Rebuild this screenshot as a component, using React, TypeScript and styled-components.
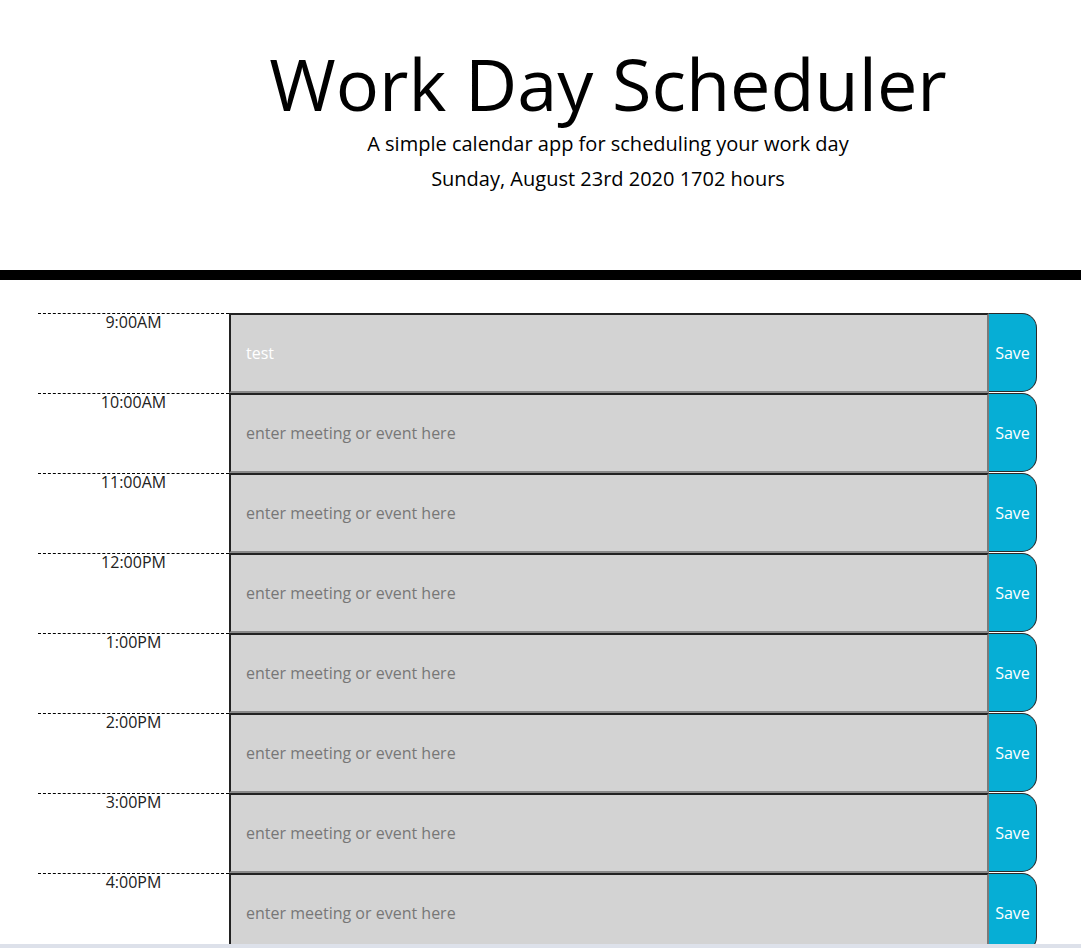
import * as React from 'react'
import styled, { createGlobalStyle } from 'styled-components'

const GlobalStyle = createGlobalStyle`
  html, body {
    margin: 0;
    padding: 0;
    overflow: hidden;
    background: #ffffff;
    font-family: 'Open Sans', 'Liberation Sans', sans-serif;
  }
`

const Jumbotron = styled.header`
  display: flex;
  flex-direction: column;
  align-items: center;
  padding: 40px 0 76px 135px;
  border-bottom: 10px solid #000000;
  color: #000000;
  text-align: center;
`

const Title = styled.h1`
  margin: 0;
  font-size: 72px;
  line-height: 86px;
  font-weight: 400;
`

const Lead = styled.p<{ $gap: number }>`
  margin: ${({ $gap }) => $gap}px 0 0;
  font-size: 20px;
  line-height: 30px;
  font-weight: 400;
`

const Planner = styled.main`
  display: flex;
  flex-direction: column;
  padding: 33px 0 0 38px;
`

const TimeRow = styled.div`
  display: grid;
  grid-template-columns: 191px 760px 48px;
  height: 80px;
`

const Hour = styled.div`
  border-top: 1px dashed #000000;
  text-align: center;
  font-size: 16px;
  line-height: 16px;
  color: #222222;
`

const Note = styled.textarea`
  box-sizing: border-box;
  width: 100%;
  height: 80px;
  margin: 0;
  resize: none;
  background: #d3d3d3;
  border-style: solid;
  border-width: 2px;
  border-color: #222222 #7a7a7a #8a8a8a #222222;
  padding: 27px 15px 0;
  font-family: 'Open Sans', 'Liberation Sans', sans-serif;
  font-size: 16px;
  line-height: 22px;
  color: #ffffff;
  outline: none;

  &::placeholder {
    color: #777777;
  }
`

const SaveBtn = styled.button`
  box-sizing: border-box;
  height: 79px;
  margin: 0;
  padding: 0;
  background: #06aed5;
  color: #ffffff;
  border: 1px solid #2a2a2a;
  border-left: none;
  border-radius: 0 15px 15px 0;
  font-family: 'Open Sans', 'Liberation Sans', sans-serif;
  font-size: 16px;
  cursor: pointer;
`

const ScrollTrack = styled.div`
  position: fixed;
  left: 0;
  right: 0;
  bottom: 0;
  height: 4px;
  background: #dde1ea;
`

const hours = ['9:00AM', '10:00AM', '11:00AM', '12:00PM', '1:00PM', '2:00PM', '3:00PM', '4:00PM']

const App: React.FC = () => {
  const [notes, setNotes] = React.useState<string[]>(['test', '', '', '', '', '', '', ''])

  return (
    <>
      <GlobalStyle />
      <Jumbotron>
        <Title>Work Day Scheduler</Title>
        <Lead $gap={3}>A simple calendar app for scheduling your work day</Lead>
        <Lead $gap={5}>Sunday, August 23rd 2020 1702 hours</Lead>
      </Jumbotron>
      <Planner>
        {hours.map((h, i) => (
          <TimeRow key={h}>
            <Hour>{h}</Hour>
            <Note
              placeholder="enter meeting or event here"
              value={notes[i]}
              onChange={(e): void => {
                const next = [...notes]
                next[i] = e.target.value
                setNotes(next)
              }}
            />
            <SaveBtn>Save</SaveBtn>
          </TimeRow>
        ))}
      </Planner>
      <ScrollTrack />
    </>
  )
}

export default App
